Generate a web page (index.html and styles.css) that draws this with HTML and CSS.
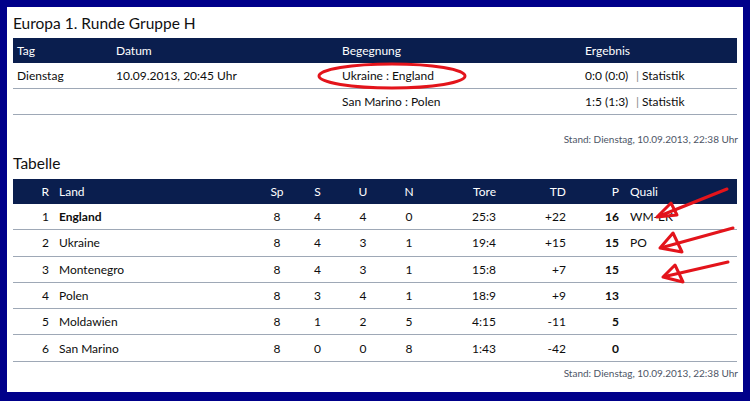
FILE: index.html
```html
<!DOCTYPE html>
<html>
<head>
  <title>Europa 1. Runde Gruppe H</title>
  <link rel="stylesheet" href="styles.css">
</head>
<body>
  <div class="panel">
    <h2 class="title">Europa 1. Runde Gruppe H</h2>
    <table class="games">
      <colgroup>
        <col class="c-tag"><col class="c-datum"><col class="c-beg"><col class="c-erg">
      </colgroup>
      <thead>
        <tr><th>Tag</th><th>Datum</th><th>Begegnung</th><th>Ergebnis</th></tr>
      </thead>
      <tbody>
        <tr>
          <td>Dienstag</td>
          <td>10.09.2013, 20:45 Uhr</td>
          <td>Ukraine : England</td>
          <td><div class="result"><span class="score">0:0 (0:0)</span><span class="sep">|</span><span>Statistik</span></div></td>
        </tr>
        <tr>
          <td></td>
          <td></td>
          <td>San Marino : Polen</td>
          <td><div class="result"><span class="score">1:5 (1:3)</span><span class="sep">|</span><span>Statistik</span></div></td>
        </tr>
      </tbody>
    </table>
    <p class="stand">Stand: Dienstag, 10.09.2013, 22:38 Uhr</p>

    <h2 class="title second">Tabelle</h2>
    <table class="standings">
      <colgroup>
        <col class="c-r"><col class="c-land"><col class="c-sp"><col class="c-s"><col class="c-u"><col class="c-n">
        <col class="c-tore"><col class="c-td"><col class="c-p"><col class="c-quali">
      </colgroup>
      <thead>
        <tr>
          <th class="rank">R</th><th class="land">Land</th><th class="mid">Sp</th><th class="mid">S</th><th class="mid">U</th><th class="mid">N</th>
          <th class="num">Tore</th><th class="num">TD</th><th class="pts">P</th><th class="quali">Quali</th>
        </tr>
      </thead>
      <tbody>
        <tr class="leader">
          <td class="rank">1</td><td class="land">England</td><td class="mid">8</td><td class="mid">4</td><td class="mid">4</td><td class="mid">0</td>
          <td class="num">25:3</td><td class="num">+22</td><td class="pts">16</td><td class="quali">WM-EK</td>
        </tr>
        <tr>
          <td class="rank">2</td><td class="land">Ukraine</td><td class="mid">8</td><td class="mid">4</td><td class="mid">3</td><td class="mid">1</td>
          <td class="num">19:4</td><td class="num">+15</td><td class="pts">15</td><td class="quali">PO</td>
        </tr>
        <tr>
          <td class="rank">3</td><td class="land">Montenegro</td><td class="mid">8</td><td class="mid">4</td><td class="mid">3</td><td class="mid">1</td>
          <td class="num">15:8</td><td class="num">+7</td><td class="pts">15</td><td class="quali"></td>
        </tr>
        <tr>
          <td class="rank">4</td><td class="land">Polen</td><td class="mid">8</td><td class="mid">3</td><td class="mid">4</td><td class="mid">1</td>
          <td class="num">18:9</td><td class="num">+9</td><td class="pts">13</td><td class="quali"></td>
        </tr>
        <tr>
          <td class="rank">5</td><td class="land">Moldawien</td><td class="mid">8</td><td class="mid">1</td><td class="mid">2</td><td class="mid">5</td>
          <td class="num">4:15</td><td class="num">-11</td><td class="pts">5</td><td class="quali"></td>
        </tr>
        <tr>
          <td class="rank">6</td><td class="land">San Marino</td><td class="mid">8</td><td class="mid">0</td><td class="mid">0</td><td class="mid">8</td>
          <td class="num">1:43</td><td class="num">-42</td><td class="pts">0</td><td class="quali"></td>
        </tr>
      </tbody>
    </table>
    <p class="stand">Stand: Dienstag, 10.09.2013, 22:38 Uhr</p>
  </div>

  <!-- Anmerkungen (rote Markierungen) -->
  <svg class="marks" width="750" height="401" viewBox="0 0 750 401">
    <g fill="none" stroke="#e3141b" stroke-width="3" stroke-linejoin="round" stroke-linecap="round">
      <ellipse cx="392" cy="76" rx="73" ry="12"/>
      <path d="M727 189 L662 215"/>
      <path d="M657 217 L671 203 L677 215 Z"/>
      <path d="M733 228 L664 247"/>
      <path d="M660 248 L673 233 L682 252 Z"/>
      <path d="M728 262 L667 276"/>
      <path d="M663 277 L675 265 L683 282 Z"/>
    </g>
  </svg>
</body>
</html>
```

FILE: styles.css
```css
body {
  margin: 0;
  width: 750px;
  height: 401px;
  background: #00008a;
  position: relative;
  font-family: Lato, "Liberation Sans", sans-serif;
  color: #0d0d0d;
  overflow: hidden;
}

.panel {
  position: absolute;
  left: 7px;
  top: 7px;
  padding: 6px 5px 0 6px;
  background: #fff;
  width: 725px;
  height: 379px;
}

.title {
  margin: 0 0 5px;
  font-size: 15.5px;
  line-height: 20px;
  font-weight: normal;
  color: #111;
}

.title.second {
  margin: 7px 0 6px;
}

table {
  width: 724px;
  border-collapse: collapse;
  table-layout: fixed;
  font-size: 12px;
}

th {
  background: #0a1e4e;
  color: #fff;
  font-weight: normal;
  height: 25px;
  padding: 0;
  text-align: left;
  white-space: nowrap;
}

td {
  height: 25px;
  padding: 0;
  border-bottom: 1px solid #9ea8b6;
  white-space: nowrap;
}

.games th, .games td {
  padding-left: 4px;
}

.c-tag { width: 99px; }
.c-datum { width: 226px; }
.c-beg { width: 243px; }
.c-erg { width: 156px; }

.result {
  display: flex;
  align-items: center;
}

.score {
  width: 43px;
  text-align: right;
}

.sep {
  color: #888;
  margin: 0 3px 0 8px;
}

.stand {
  margin: 0;
  text-align: right;
  font-size: 10px;
  color: #4d5566;
  line-height: 14px;
  padding: 17px 0 0;
}

.c-r { width: 39px; }
.c-land { width: 205px; }
.c-sp { width: 40px; }
.c-s { width: 41px; }
.c-u { width: 50px; }
.c-n { width: 42px; }
.c-tore { width: 70px; }
.c-td { width: 70px; }
.c-p { width: 52px; }
.c-quali { width: 115px; }

.standings .rank { text-align: right; padding-right: 3px; }
.standings .land { padding-left: 7px; }
.standings .mid { text-align: center; }
.standings .num { text-align: right; padding-right: 4px; }
.standings .pts { text-align: right; padding-right: 3px; font-weight: bold; }
.standings th.pts { font-weight: normal; }
.standings .quali { padding-left: 8px; }

.standings td {
  height: 25.3px;
}

.leader .land { font-weight: bold; }

.standings + .stand {
  padding-top: 4px;
}

.marks {
  position: absolute;
  left: 0;
  top: 0;
}
```
